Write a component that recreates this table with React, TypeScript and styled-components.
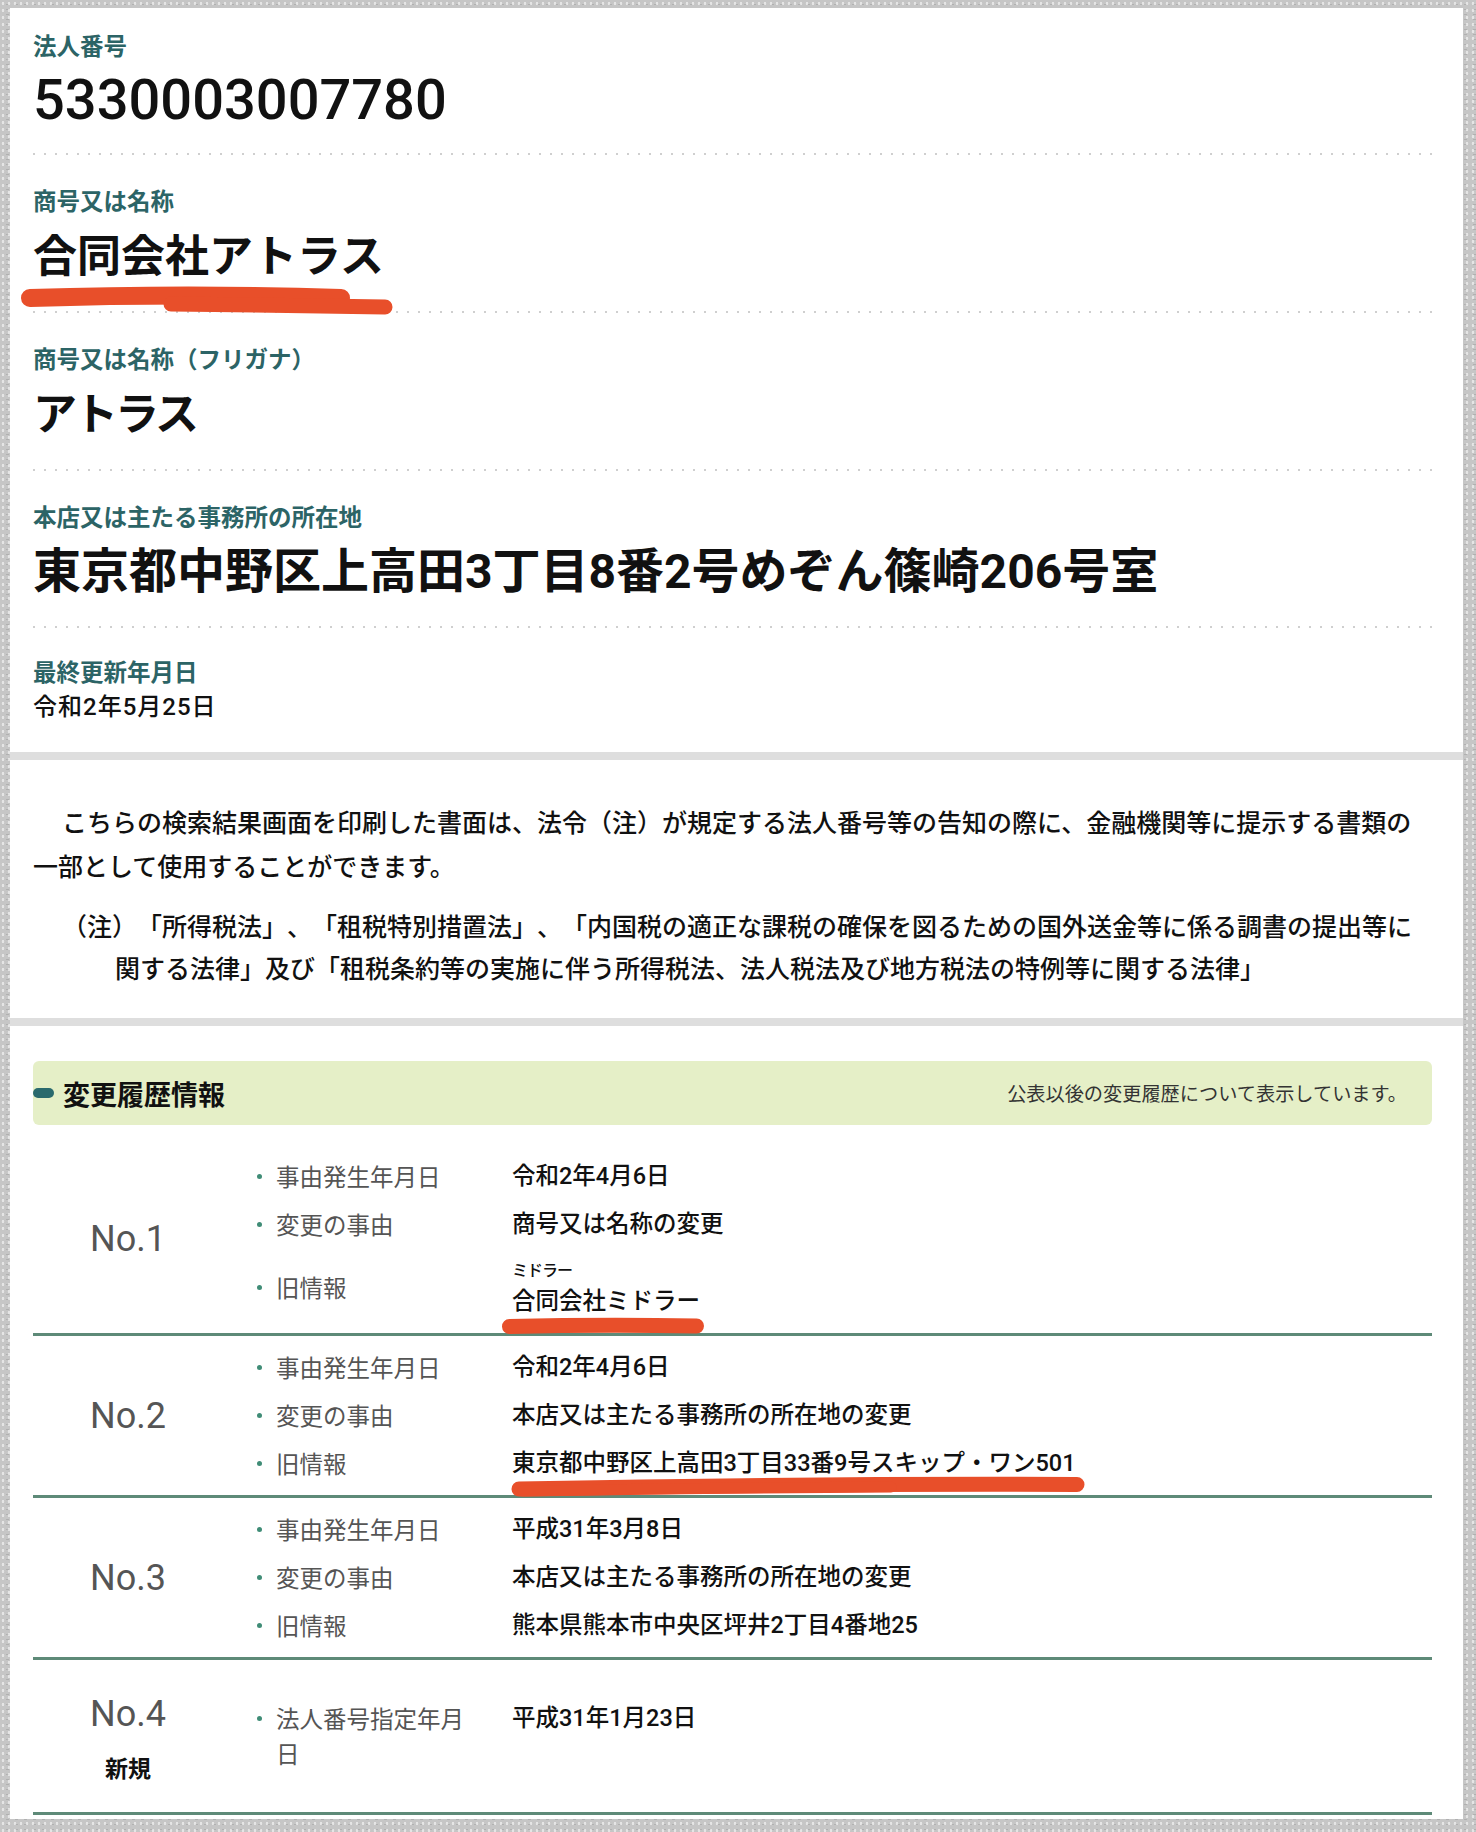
import React from "react";
import styled, { createGlobalStyle } from "styled-components";

const GlobalStyle = createGlobalStyle`
  html, body { margin: 0; padding: 0; }
  body {
    background-color: #c6c6c6;
    background-image:
      radial-gradient(rgba(255,255,255,0.55) 1px, transparent 1.6px),
      radial-gradient(rgba(150,150,150,0.45) 1px, transparent 1.6px);
    background-size: 6px 7px, 9px 5px;
    background-position: 0 0, 3px 2px;
    font-family: Roboto, "Noto Sans CJK JP", sans-serif;
    color: #111;
    text-spacing-trim: space-all;
  }
`;

const Panel = styled.div`
  margin: 8px 13px 13px 10px;
  background: #fff;
`;

const TopSection = styled.section`
  padding: 0 31px 0 23px;
`;

const Field = styled.div<{ $first?: boolean; $last?: boolean }>`
  padding-top: ${(p) => (p.$first ? 22 : p.$last ? 28 : 30)}px;
  padding-bottom: ${(p) => (p.$first ? 23 : p.$last ? 28 : 24)}px;
  background: ${(p) =>
    p.$last
      ? "none"
      : "linear-gradient(to right, #cfcfcf 2px, transparent 2px) left bottom / 11px 2px repeat-x"};
`;

const FieldLabel = styled.div`
  font-family: "Noto Sans CJK JP", sans-serif;
  font-size: 23.5px;
  font-weight: 700;
  line-height: 30px;
  color: #2c6466;
`;

type ValueKind = "number" | "name" | "kana" | "address" | "date";

const sizes: Record<ValueKind, { fs: number; lh: number; fw: number; mt: number; ls: number }> = {
  number: { fs: 56, lh: 64, fw: 500, mt: 8, ls: 0 },
  name: { fs: 44, lh: 64, fw: 700, mt: 10, ls: 0 },
  kana: { fs: 44, lh: 64, fw: 700, mt: 10, ls: -3 },
  address: { fs: 48, lh: 64, fw: 700, mt: 9, ls: 0 },
  date: { fs: 24, lh: 34, fw: 500, mt: 4, ls: 1 },
};

const FieldValue = styled.div<{ $kind: ValueKind }>`
  font-size: ${(p) => sizes[p.$kind].fs}px;
  line-height: ${(p) => sizes[p.$kind].lh}px;
  font-weight: ${(p) => sizes[p.$kind].fw};
  margin-top: ${(p) => sizes[p.$kind].mt}px;
  letter-spacing: ${(p) => sizes[p.$kind].ls}px;
  color: #111;
  white-space: nowrap;
`;

const Marked = styled.span`
  position: relative;
  display: inline-block;
`;

const Stroke = styled.svg<{ $left: number; $top: number }>`
  position: absolute;
  left: ${(p) => p.$left}px;
  top: ${(p) => p.$top}px;
  overflow: visible;
  pointer-events: none;
`;

const NoticeSection = styled.section`
  border-top: 8px solid #dedede;
  border-bottom: 8px solid #dedede;
  padding: 39px 31px 30px 23px;
  font-family: "Noto Sans CJK JP", sans-serif;
  font-size: 25px;
  font-weight: 500;
  color: #111;
`;

const NoticeText = styled.p`
  margin: 0;
  line-height: 44px;
  text-indent: 29px;
`;

const NoteText = styled.p`
  margin: 17px 0 0;
  line-height: 42px;
  padding-left: 82px;
  text-indent: -53px;
`;

const HistorySection = styled.section`
  padding: 35px 31px 4px 23px;
`;

const Bar = styled.div`
  display: flex;
  align-items: center;
  justify-content: space-between;
  height: 64px;
  background: #e5efc7;
  border-radius: 6px;
  padding-right: 25px;
  margin-bottom: 20px;
`;

const BarTitle = styled.h2`
  display: flex;
  align-items: center;
  gap: 9px;
  margin: 0;
  font-family: "Noto Sans CJK JP", sans-serif;
  font-size: 27px;
  font-weight: 700;
  color: #111;
`;

const Marker = styled.span`
  display: block;
  width: 21px;
  height: 10px;
  border-radius: 5px;
  background: #2a6a6d;
`;

const BarNote = styled.span`
  font-family: "Noto Sans CJK JP", sans-serif;
  font-size: 19.2px;
  color: #333;
`;

const Row = styled.div`
  display: grid;
  grid-template-columns: 190px 1fr;
  column-gap: 34px;
  align-items: center;
  padding: 14px 0;
  border-bottom: 3px solid #5e8a78;
`;

const NoCell = styled.div`
  display: flex;
  flex-direction: column;
  align-items: center;
  padding: 16px 0;
`;

const NoText = styled.div`
  font-size: 36px;
  line-height: 48px;
  color: #555;
`;

const NewTag = styled.div`
  font-family: "Noto Sans CJK JP", sans-serif;
  font-size: 23px;
  font-weight: 700;
  line-height: 30px;
  margin-top: 14px;
  color: #111;
`;

const Items = styled.div`
  display: flex;
  flex-direction: column;
  gap: 13px;
`;

const Item = styled.div`
  display: grid;
  grid-template-columns: 255px 1fr;
`;

const ItemLabel = styled.div`
  align-self: center;
  display: flex;
  align-items: flex-start;
`;

const Bullet = styled.span`
  flex: none;
  width: 5px;
  height: 5px;
  border-radius: 50%;
  background: #3f8c76;
  margin: 15px 14px 0 0;
`;

const LabelText = styled.span`
  max-width: 200px;
  font-family: "Noto Sans CJK JP", sans-serif;
  font-size: 23.5px;
  line-height: 35px;
  color: #555;
`;

const ItemValue = styled.div`
  align-self: start;
  font-size: 23.5px;
  font-weight: 500;
  line-height: 35px;
  color: #111;
`;

const Furigana = styled.div`
  font-family: "Noto Sans CJK JP", sans-serif;
  font-size: 16px;
  line-height: 29px;
  font-weight: 500;
  letter-spacing: -1px;
`;

const RED = "#e84f2a";

type HistItem = { label: string; value: React.ReactNode };
type Hist = { no: string; isNew?: boolean; items: HistItem[] };

const history: Hist[] = [
  {
    no: "No.1",
    items: [
      { label: "事由発生年月日", value: "令和2年4月6日" },
      { label: "変更の事由", value: "商号又は名称の変更" },
      {
        label: "旧情報",
        value: (
          <>
            <Furigana>ミドラー</Furigana>
            <Marked>
              合同会社ミドラー
              <Stroke $left={-10} $top={34} width="202" height="16" viewBox="0 0 202 16">
                <path d="M7.5 8.5 Q 100 6.5 194.5 8" stroke={RED} strokeWidth="15" strokeLinecap="round" fill="none" />
              </Stroke>
            </Marked>
          </>
        ),
      },
    ],
  },
  {
    no: "No.2",
    items: [
      { label: "事由発生年月日", value: "令和2年4月6日" },
      { label: "変更の事由", value: "本店又は主たる事務所の所在地の変更" },
      {
        label: "旧情報",
        value: (
          <Marked>
            東京都中野区上高田3丁目33番9号スキップ・ワン501
            <Stroke $left={-1} $top={30} width="574" height="22" viewBox="0 0 574 22">
              <path d="M8 13 Q 290 7.5 566 8.5" stroke={RED} strokeWidth="15" strokeLinecap="round" fill="none" />
              <path d="M12 15 Q 200 12 380 11" stroke={RED} strokeWidth="11" strokeLinecap="round" fill="none" />
            </Stroke>
          </Marked>
        ),
      },
    ],
  },
  {
    no: "No.3",
    items: [
      { label: "事由発生年月日", value: "平成31年3月8日" },
      { label: "変更の事由", value: "本店又は主たる事務所の所在地の変更" },
      { label: "旧情報", value: "熊本県熊本市中央区坪井2丁目4番地25" },
    ],
  },
  {
    no: "No.4",
    isNew: true,
    items: [{ label: "法人番号指定年月日", value: "平成31年1月23日" }],
  },
];

export default function App() {
  return (
    <>
      <GlobalStyle />
      <Panel>
        <TopSection>
          <Field $first>
            <FieldLabel>法人番号</FieldLabel>
            <FieldValue $kind="number">5330003007780</FieldValue>
          </Field>
          <Field>
            <FieldLabel>商号又は名称</FieldLabel>
            <FieldValue $kind="name">
              <Marked>
                合同会社アトラス
                <Stroke $left={-12} $top={56} width="375" height="36" viewBox="0 0 375 36">
                  <path d="M9 17 Q 170 12 320 17" stroke={RED} strokeWidth="18" strokeLinecap="round" fill="none" />
                  <path d="M150 23 Q 260 24 364 26" stroke={RED} strokeWidth="15" strokeLinecap="round" fill="none" />
                </Stroke>
              </Marked>
            </FieldValue>
          </Field>
          <Field>
            <FieldLabel>商号又は名称（フリガナ）</FieldLabel>
            <FieldValue $kind="kana">アトラス</FieldValue>
          </Field>
          <Field>
            <FieldLabel>本店又は主たる事務所の所在地</FieldLabel>
            <FieldValue $kind="address">東京都中野区上高田3丁目8番2号めぞん篠崎206号室</FieldValue>
          </Field>
          <Field $last>
            <FieldLabel>最終更新年月日</FieldLabel>
            <FieldValue $kind="date">令和2年5月25日</FieldValue>
          </Field>
        </TopSection>

        <NoticeSection>
          <NoticeText>
            こちらの検索結果画面を印刷した書面は、法令（注）が規定する法人番号等の告知の際に、金融機関等に提示する書類の一部として使用することができます。
          </NoticeText>
          <NoteText>
            （注）「所得税法」、「租税特別措置法」、「内国税の適正な課税の確保を図るための国外送金等に係る調書の提出等に関する法律」及び「租税条約等の実施に伴う所得税法、法人税法及び地方税法の特例等に関する法律」
          </NoteText>
        </NoticeSection>

        <HistorySection>
          <Bar>
            <BarTitle>
              <Marker />
              変更履歴情報
            </BarTitle>
            <BarNote>公表以後の変更履歴について表示しています。</BarNote>
          </Bar>
          {history.map((h) => (
            <Row key={h.no}>
              <NoCell>
                <NoText>{h.no}</NoText>
                {h.isNew && <NewTag>新規</NewTag>}
              </NoCell>
              <Items>
                {h.items.map((it) => (
                  <Item key={it.label}>
                    <ItemLabel>
                      <Bullet />
                      <LabelText>{it.label}</LabelText>
                    </ItemLabel>
                    <ItemValue>{it.value}</ItemValue>
                  </Item>
                ))}
              </Items>
            </Row>
          ))}
        </HistorySection>
      </Panel>
    </>
  );
}
